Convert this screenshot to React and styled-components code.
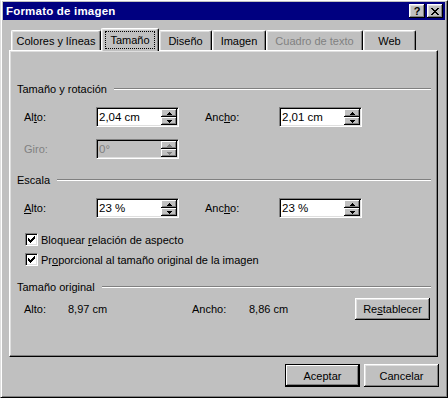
import React from 'react';
import styled, { createGlobalStyle } from 'styled-components';

const GlobalStyle = createGlobalStyle`
  html, body {
    margin: 0;
    padding: 0;
    background: #808080;
  }
  body {
    font-family: "Liberation Sans", Arial, sans-serif;
    font-size: 11px;
    color: #000;
  }
`;

const Window = styled.div`
  box-sizing: border-box;
  width: 448px;
  height: 398px;
  background: #c0c0c0;
  border-top: 1px solid #ffffff;
  border-left: 1px solid #dfdfdf;
  border-right: 1px solid #000000;
  border-bottom: 1px solid #000000;
  box-shadow: inset 1px 0 0 #ffffff, inset -1px -1px 0 #808080;
  padding: 1px 2px 2px 2px;
  display: flex;
  flex-direction: column;
`;

const TitleBar = styled.div`
  height: 18px;
  background: #000080;
  display: flex;
  align-items: center;
  padding: 0 2px 0 3px;
`;

const Title = styled.span`
  flex: 1;
  color: #ffffff;
  font-weight: bold;
  font-size: 11.5px;
  letter-spacing: 0.2px;
`;

const CaptionButton = styled.div`
  box-sizing: border-box;
  width: 16px;
  height: 14px;
  margin-left: ${p => (p.gap ? '2px' : '0')};
  background: #c0c0c0;
  box-shadow: inset -1px -1px 0 #000000, inset 1px 1px 0 #ffffff,
    inset -2px -2px 0 #808080, inset 2px 2px 0 #dfdfdf;
  display: flex;
  align-items: center;
  justify-content: center;
  font-weight: bold;
  font-size: 11px;
  line-height: 1;
`;

const Body = styled.div`
  flex: 1;
  display: flex;
  flex-direction: column;
  padding: 8px 6px 0 6px;
`;

const TabRow = styled.div`
  display: flex;
  align-items: flex-start;
  height: 23px;
  margin-bottom: -1px;
  padding-left: 2px;
`;

const Tab = styled.div`
  box-sizing: border-box;
  position: relative;
  z-index: ${p => (p.selected ? 2 : 1)};
  width: ${p => p.w}px;
  height: ${p => (p.selected ? 23 : 20)}px;
  margin-top: ${p => (p.selected ? 0 : 2)}px;
  background: #c0c0c0;
  border-top: 1px solid #ffffff;
  border-left: 1px solid #ffffff;
  border-right: 1px solid #000000;
  border-radius: 2px 2px 0 0;
  box-shadow: inset -1px 0 0 #808080, inset 1px 1px 0 #dfdfdf;
  display: flex;
  align-items: ${p => (p.selected ? 'flex-start' : 'center')};
  padding-top: ${p => (p.selected ? 3 : 1)}px;
  justify-content: center;
  color: ${p => (p.disabled ? '#808080' : '#000000')};
  font-size: 11px;
`;

const TabFocus = styled.span`
  outline: 1px dotted #000000;
  outline-offset: 0;
  padding: 2px 4px 2px 4px;
`;

const Panel = styled.div`
  box-sizing: border-box;
  width: 429px;
  height: 307px;
  background: #c0c0c0;
  border-top: 1px solid #ffffff;
  border-left: 1px solid #ffffff;
  border-right: 1px solid #000000;
  border-bottom: 1px solid #000000;
  box-shadow: inset -1px -1px 0 #808080, inset 1px 1px 0 #dfdfdf;
  padding: 31px 6px 0 7px;
  display: flex;
  flex-direction: column;
`;

const SectionHeader = styled.div`
  height: 14px;
  display: flex;
  align-items: center;
  margin-top: ${p => p.top || 0}px;
`;

const Rule = styled.div`
  flex: 1;
  height: 0;
  margin-left: 7px;
  border-top: 1px solid #808080;
  border-bottom: 1px solid #ffffff;
`;

const Row = styled.div`
  display: flex;
  align-items: center;
  height: ${p => p.h || 20}px;
  margin-top: ${p => p.top || 0}px;
  padding-left: 7px;
`;

const Label = styled.span`
  width: ${p => p.w}px;
  flex-shrink: 0;
  color: ${p => (p.disabled ? '#808080' : '#000000')};
`;

const Accel = styled.span`
  text-decoration: underline;
`;

const Field = styled.div`
  box-sizing: border-box;
  width: 83px;
  height: 20px;
  flex-shrink: 0;
  background: ${p => (p.disabled ? '#c0c0c0' : '#ffffff')};
  border-top: 1px solid #808080;
  border-left: 1px solid #808080;
  border-right: 1px solid #ffffff;
  border-bottom: 1px solid #ffffff;
  box-shadow: inset 1px 1px 0 #000000, inset -1px -1px 0 #dfdfdf;
  padding: 1px;
  display: flex;
  margin-right: ${p => p.mr || 0}px;
`;

const FieldText = styled.span`
  flex: 1;
  padding-left: 1px;
  display: flex;
  align-items: center;
  font-size: 11.5px;
  color: ${p => (p.disabled ? '#808080' : '#000000')};
`;

const Spinner = styled.div`
  width: 16px;
  display: flex;
  flex-direction: column;
`;

const SpinButton = styled.div`
  box-sizing: border-box;
  height: 8px;
  background: #c0c0c0;
  box-shadow: inset -1px -1px 0 #000000, inset 1px 1px 0 #ffffff,
    inset -2px -2px 0 #808080;
  display: flex;
  align-items: center;
  justify-content: center;
`;

const Arrow = ({ down, disabled }) => (
  <svg width="5" height="3" viewBox="0 0 5 3" style={{ display: 'block' }}>
    <path
      d={down ? 'M0 0H5L2.5 3Z' : 'M0 3H5L2.5 0Z'}
      fill={disabled ? '#808080' : '#000000'}
      shapeRendering="crispEdges"
    />
  </svg>
);

const SpinField = ({ value, disabled, mr }) => (
  <Field disabled={disabled} mr={mr}>
    <FieldText disabled={disabled}>{value}</FieldText>
    <Spinner>
      <SpinButton><Arrow disabled={disabled} /></SpinButton>
      <SpinButton><Arrow down disabled={disabled} /></SpinButton>
    </Spinner>
  </Field>
);

const CheckRow = styled.label`
  display: flex;
  align-items: center;
  height: 13px;
  margin-top: ${p => p.top || 0}px;
  padding-left: 8px;
  white-space: pre;
`;

const CheckBox = styled.span`
  box-sizing: border-box;
  width: 13px;
  height: 13px;
  margin-right: 3px;
  background: #ffffff;
  border-top: 1px solid #808080;
  border-left: 1px solid #808080;
  border-right: 1px solid #ffffff;
  border-bottom: 1px solid #ffffff;
  box-shadow: inset 1px 1px 0 #000000, inset -1px -1px 0 #dfdfdf;
  display: flex;
  align-items: center;
  justify-content: center;
`;

const Check = () => (
  <svg width="7" height="7" viewBox="0 0 7 7" style={{ display: 'block' }}>
    <path
      d="M0 2h1v1h1v1h1v-1h1v-1h1v-1h1v-1h1v3h-1v1h-1v1h-1v1h-1v1h-1v-1h-1v-1h-1v-1h-1z"
      fill="#000000"
      shapeRendering="crispEdges"
    />
  </svg>
);

const Value = styled.span`
  width: ${p => p.w}px;
  flex-shrink: 0;
`;

const Spacer = styled.div`
  flex: 1;
`;

const Button = styled.div`
  box-sizing: border-box;
  width: ${p => p.w || 75}px;
  height: ${p => p.h || 23}px;
  background: #c0c0c0;
  border: ${p => (p.isDefault ? '1px solid #000000' : 'none')};
  box-shadow: ${p =>
    p.isDefault
      ? 'inset -1px -1px 0 #000000, inset 1px 1px 0 #ffffff, inset -2px -2px 0 #808080'
      : 'inset -1px -1px 0 #000000, inset 1px 1px 0 #ffffff, inset -2px -2px 0 #808080, inset 2px 2px 0 #dfdfdf'};
  display: flex;
  align-items: center;
  justify-content: center;
  margin-left: ${p => p.ml || 0}px;
  margin-right: ${p => p.mr || 0}px;
`;

const Footer = styled.div`
  display: flex;
  justify-content: flex-end;
  margin-top: 7px;
`;

const tabs = [
  { label: 'Colores y líneas', w: 90 },
  { label: 'Tamaño', w: 58, selected: true },
  { label: 'Diseño', w: 53 },
  { label: 'Imagen', w: 54 },
  { label: 'Cuadro de texto', w: 97, disabled: true },
  { label: 'Web', w: 53 },
];

const App = () => (
  <>
    <GlobalStyle />
    <Window>
      <TitleBar>
        <Title>Formato de imagen</Title>
        <CaptionButton>?</CaptionButton>
        <CaptionButton gap>
          <svg width="8" height="7" viewBox="0 0 8 7" style={{ display: 'block' }}>
            <path
              d="M0 0h2v1h1v1h2v-1h1v-1h2v1h-1v1h-1v1h-1v1h1v1h1v1h1v1h-2v-1h-1v-1h-2v1h-1v1h-2v-1h1v-1h1v-1h1v-1h-1v-1h-1v-1h-1z"
              fill="#000000"
              shapeRendering="crispEdges"
            />
          </svg>
        </CaptionButton>
      </TitleBar>
      <Body>
        <TabRow>
          {tabs.map(t => (
            <Tab key={t.label} w={t.w} selected={t.selected} disabled={t.disabled}>
              {t.selected ? <TabFocus>{t.label}</TabFocus> : t.label}
            </Tab>
          ))}
        </TabRow>
        <Panel>
          <SectionHeader>
            Tamaño y rotación
            <Rule />
          </SectionHeader>
          <Row top={11}>
            <Label w={72}>Al<Accel>t</Accel>o:</Label>
            <SpinField value="2,04 cm" mr={26} />
            <Label w={74}>Anc<Accel>h</Accel>o:</Label>
            <SpinField value="2,01 cm" />
          </Row>
          <Row top={12}>
            <Label w={72} disabled>Giro:</Label>
            <SpinField value="0°" disabled />
          </Row>
          <SectionHeader top={14}>
            Escala
            <Rule />
          </SectionHeader>
          <Row top={11}>
            <Label w={72}><Accel>A</Accel>lto:</Label>
            <SpinField value="23 %" mr={26} />
            <Label w={74}>Anc<Accel>h</Accel>o:</Label>
            <SpinField value="23 %" />
          </Row>
          <CheckRow top={15}>
            <CheckBox><Check /></CheckBox>
            {'Bloquear '}<Accel>r</Accel>elación de aspecto
          </CheckRow>
          <CheckRow top={7}>
            <CheckBox><Check /></CheckBox>
            Pr<Accel>o</Accel>porcional al tamaño original de la imagen
          </CheckRow>
          <SectionHeader top={14}>
            Tamaño original
            <Rule />
          </SectionHeader>
          <Row top={4} h={22}>
            <Label w={44}>Alto:</Label>
            <Value w={124}>8,97 cm</Value>
            <Label w={57}>Ancho:</Label>
            <Value w={60}>8,86 cm</Value>
            <Spacer />
            <Button w={75} h={22} mr={1}>Re<Accel>s</Accel>tablecer</Button>
          </Row>
        </Panel>
        <Footer>
          <Button isDefault w={75}>Aceptar</Button>
          <Button w={75} ml={4}>Cancelar</Button>
        </Footer>
      </Body>
    </Window>
  </>
);

export default App;
